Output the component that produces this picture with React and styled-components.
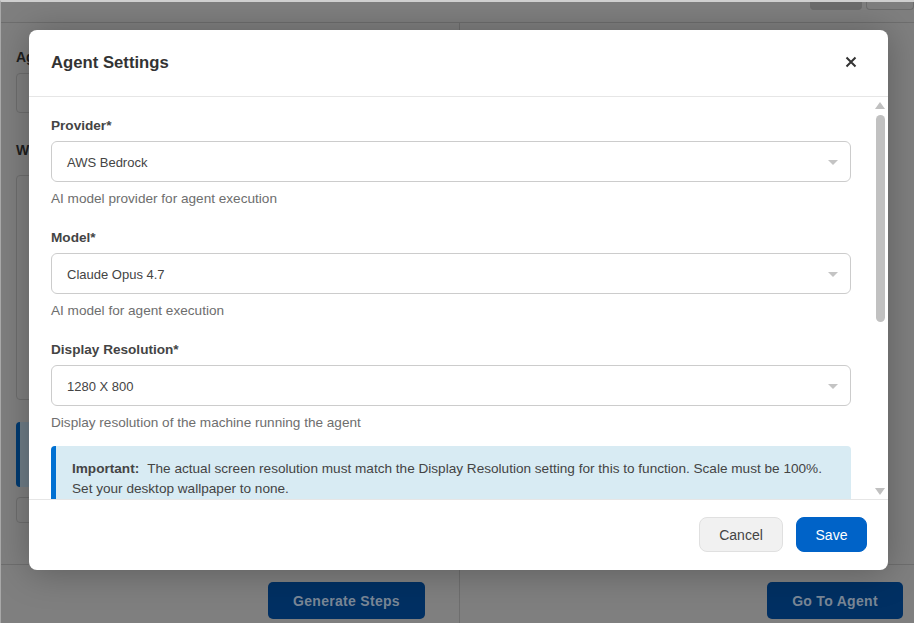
import React from "react";
import styled, { createGlobalStyle } from "styled-components";

const Global = createGlobalStyle`
  html, body { margin: 0; padding: 0; width: 914px; height: 623px; overflow: hidden; background: #7f7f7f; }
  * { box-sizing: border-box; }
  body { font-family: "Liberation Sans", Arial, sans-serif; }
`;

const Page = styled.div`
  position: relative;
  width: 914px;
  height: 623px;
  background: #7f7f7f;
  border-top: 2px solid #cfcfcf;
  border-left: 1px solid #a8a8a8;
  display: flex;
  flex-direction: column;
  overflow: hidden;
`;
const TopBar = styled.div`
  height: 21px;
  flex: none;
  border-bottom: 1px solid #6e6e6e;
  display: flex;
  justify-content: flex-end;
  gap: 4px;
`;
const TopButton = styled.div`
  width: ${p => p.$w}px;
  height: 8px;
  border-radius: 0 0 4px 4px;
  background: ${p => (p.$filled ? "#6c6c6c" : "#7f7f7f")};
  border: 1px solid #6c6c6c;
  border-top: 0;
`;
const Body = styled.div`
  flex: 1;
  display: flex;
  min-height: 0;
`;
const LeftPane = styled.div`
  width: 459px;
  flex: none;
  border-right: 1px solid #6e6e6e;
  padding: 26px 15px 0;
  display: flex;
  flex-direction: column;
`;
const RightPane = styled.div`
  flex: 1;
`;
const BgLabel = styled.div`
  font-size: 14px;
  font-weight: 700;
  line-height: 16px;
  margin-top: ${p => p.$mt || 0}px;
  color: #1d1d1d;
`;
const BgField = styled.div`
  height: ${p => p.$h}px;
  margin-top: ${p => p.$mt}px;
  border: 1px solid #6e6e6e;
  border-radius: 4px;
`;
const BgBlue = styled.div`
  height: 65px;
  margin-top: 22px;
  border-radius: 4px;
  background: #6f7d87;
  border-left: 4px solid #013a70;
`;
const BottomBar = styled.div`
  height: 59px;
  flex: none;
  border-top: 1px solid #6e6e6e;
  display: flex;
`;
const BottomLeft = styled.div`
  width: 459px;
  flex: none;
  border-right: 1px solid #6e6e6e;
  padding: 17px 34px 0 0;
  display: flex;
  justify-content: flex-end;
  align-items: flex-start;
`;
const BottomRight = styled.div`
  flex: 1;
  padding: 17px 11px 0 0;
  display: flex;
  justify-content: flex-end;
  align-items: flex-start;
`;
const DarkButton = styled.div`
  height: 37px;
  width: ${p => p.$w}px;
  border-radius: 5px;
  background: #013063;
  color: #7a8796;
  font-size: 14px;
  font-weight: 700;
  letter-spacing: 0.3px;
  display: flex;
  align-items: center;
  justify-content: center;
`;

const Modal = styled.div`
  position: absolute;
  left: 28px;
  top: 28px;
  width: 859px;
  height: 540px;
  background: #fff;
  border-radius: 8px;
  display: flex;
  flex-direction: column;
  overflow: hidden;
  box-shadow: 0 2px 36px rgba(0, 0, 0, 0.28);
`;
const ModalHeader = styled.div`
  height: 67px;
  flex: none;
  padding: 0 31px 0 22px;
  border-bottom: 1px solid #e6e6e6;
  display: flex;
  align-items: center;
  justify-content: space-between;
`;
const Title = styled.h2`
  margin: 0;
  font-size: 16.7px;
  font-weight: 700;
  color: #333;
`;
const CloseButton = styled.div`
  width: 12px;
  height: 12px;
  margin-top: -2px;
  color: #333;
  display: flex;
`;
const ModalBody = styled.div`
  position: relative;
  flex: 1;
  min-height: 0;
  overflow: hidden;
  padding: 20px 37px 0 22px;
`;
const Field = styled.div`
  margin-bottom: 22px;
`;
const Label = styled.div`
  font-size: 13.6px;
  font-weight: 700;
  line-height: 16px;
  padding-top: 1px;
  color: #444;
`;
const Select = styled.div`
  height: 41px;
  margin-top: 7px;
  border: 1px solid #ccc;
  border-radius: 6px;
  padding: 1px 12px 0 15px;
  display: flex;
  align-items: center;
  justify-content: space-between;
  font-size: 13px;
  color: #444;
`;
const Caret = styled.span`
  width: 0;
  height: 0;
  border-left: 5px solid transparent;
  border-right: 5px solid transparent;
  border-top: 5px solid #c4c4c4;
`;
const Hint = styled.div`
  margin-top: 9px;
  font-size: 13.6px;
  line-height: 16px;
  color: #6e6e6e;
`;
const Notice = styled.div`
  margin-top: -7px;
  height: 80px;
  padding: 13px 20px 0 16px;
  background: #d8ebf3;
  border-left: 5px solid #0070d2;
  border-radius: 4px;
  font-size: 13.6px;
  line-height: 20px;
  color: #444;
`;
const NoticeStrong = styled.strong`
  font-weight: 700;
  margin-right: 8px;
`;
const Scrollbar = styled.div`
  position: absolute;
  right: 3px;
  top: 0;
  bottom: 0;
  width: 10px;
  display: flex;
  flex-direction: column;
  align-items: center;
`;
const ScrollArrow = styled.span`
  position: absolute;
  ${p => (p.$down ? "bottom: 4px;" : "top: 5px;")}
  width: 0;
  height: 0;
  border-left: 5px solid transparent;
  border-right: 5px solid transparent;
  ${p => (p.$down ? "border-top: 7px solid #c0c0c0;" : "border-bottom: 7px solid #c0c0c0;")}
`;
const ScrollThumb = styled.div`
  position: absolute;
  top: 18px;
  width: 9px;
  height: 207px;
  border-radius: 5px;
  background: #c1c1c1;
`;
const ModalFooter = styled.div`
  height: 71px;
  flex: none;
  border-top: 1px solid #e6e6e6;
  padding: 17px 21px 0 0;
  display: flex;
  justify-content: flex-end;
  align-items: flex-start;
  gap: 13px;
`;
const Button = styled.div`
  height: 35px;
  width: ${p => p.$w}px;
  border-radius: 8px;
  font-size: 14px;
  display: flex;
  align-items: center;
  justify-content: center;
  background: ${p => (p.$primary ? "#0063c8" : "#f1f1f1")};
  color: ${p => (p.$primary ? "#fff" : "#444")};
  border: 1px solid ${p => (p.$primary ? "#0063c8" : "#e0e0e0")};
`;

const fields = [
  { label: "Provider*", value: "AWS Bedrock", hint: "AI model provider for agent execution" },
  { label: "Model*", value: "Claude Opus 4.7", hint: "AI model for agent execution" },
  { label: "Display Resolution*", value: "1280 X 800", hint: "Display resolution of the machine running the agent" },
];

export default function App() {
  return (
    <>
      <Global />
      <Page>
        <TopBar>
          <TopButton $w={52} $filled />
          <TopButton $w={48} />
        </TopBar>
        <Body>
          <LeftPane>
            <BgLabel>Agent</BgLabel>
            <BgField $h={40} $mt={8} />
            <BgLabel $mt={29}>Workflow</BgLabel>
            <BgField $h={225} $mt={17} />
            <BgBlue />
            <BgField $h={26} $mt={10} />
          </LeftPane>
          <RightPane />
        </Body>
        <BottomBar>
          <BottomLeft>
            <DarkButton $w={157}>Generate Steps</DarkButton>
          </BottomLeft>
          <BottomRight>
            <DarkButton $w={136}>Go To Agent</DarkButton>
          </BottomRight>
        </BottomBar>
        <Modal>
          <ModalHeader>
            <Title>Agent Settings</Title>
            <CloseButton>
              <svg width="12" height="12" viewBox="0 0 12 12" fill="none">
                <path d="M1.5 1.5l9 9M10.5 1.5l-9 9" stroke="currentColor" strokeWidth="2" />
              </svg>
            </CloseButton>
          </ModalHeader>
          <ModalBody>
            {fields.map(f => (
              <Field key={f.label}>
                <Label>{f.label}</Label>
                <Select>
                  {f.value}
                  <Caret />
                </Select>
                <Hint>{f.hint}</Hint>
              </Field>
            ))}
            <Notice>
              <NoticeStrong>Important:</NoticeStrong>
              <span>The actual screen resolution must match the Display Resolution setting for this to function. Scale must be 100%. Set your desktop wallpaper to none.</span>
            </Notice>
            <Scrollbar>
              <ScrollArrow />
              <ScrollThumb />
              <ScrollArrow $down />
            </Scrollbar>
          </ModalBody>
          <ModalFooter>
            <Button $w={84}>Cancel</Button>
            <Button $primary $w={71}>Save</Button>
          </ModalFooter>
        </Modal>
      </Page>
    </>
  );
}
